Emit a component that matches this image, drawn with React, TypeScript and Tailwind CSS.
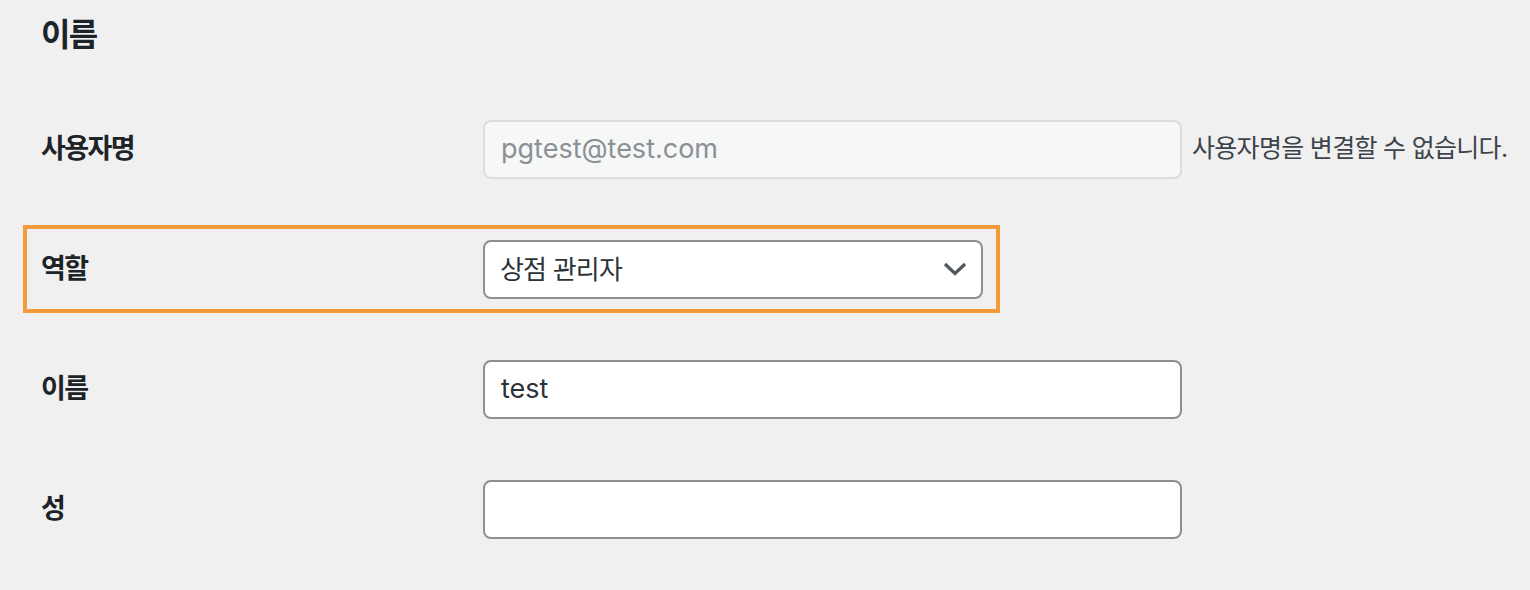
import React from "react";

const FONT = { fontFamily: '"Inter", "Noto Sans CJK KR", sans-serif' };

function Label({ children }: { children: React.ReactNode }) {
  return (
    <div className="w-[456px] shrink-0 pl-[14px] text-[27px] font-semibold tracking-[-1.6px] text-[#1d2327]">
      {children}
    </div>
  );
}

export default function App() {
  return (
    <div className="min-h-screen bg-[#f0f0f0]" style={FONT}>
      <div className="pl-[41px] pt-[15px]">
        <h2 className="text-[32px] leading-[40px] font-semibold tracking-[-1.6px] text-[#1d2327]">이름</h2>
      </div>
      <div className="mt-[50px] pl-[23px] flex flex-col gap-[32px]">
        <div className="h-[88px] border-4 border-transparent flex items-center">
          <Label>사용자명</Label>
          <div className="w-[699px] h-[59px] shrink-0 rounded-[8px] border-2 border-[#dcdcde] bg-[#f6f7f7] flex items-center pl-[16px] text-[27px] text-[#8c8f94]">
            pgtest@test.com
          </div>
          <div className="ml-[10px] text-[25px] tracking-[-0.7px] text-[#3c434a] whitespace-nowrap">
            사용자명을 변결할 수 없습니다.
          </div>
        </div>
        <div className="w-[977px] h-[88px] border-4 border-[#f39a3b] flex items-center">
          <Label>역할</Label>
          <div className="w-[500px] h-[59px] shrink-0 rounded-[8px] border-2 border-[#8c8f94] bg-white flex items-center justify-between pl-[15px] pr-[14px]">
            <span className="text-[26px] tracking-[-0.8px] text-[#2c3338]">상점 관리자</span>
            <svg width="24" height="14" viewBox="0 0 24 14" fill="none">
              <path d="M2 2 L12 11.5 L22 2" stroke="#50575e" strokeWidth="3.2" />
            </svg>
          </div>
        </div>
        <div className="h-[88px] border-4 border-transparent flex items-center">
          <Label>이름</Label>
          <div className="w-[699px] h-[59px] shrink-0 rounded-[8px] border-2 border-[#8c8f94] bg-white flex items-center pl-[16px] text-[27px] text-[#2c3338]">
            test
          </div>
        </div>
        <div className="h-[88px] border-4 border-transparent flex items-center">
          <Label>성</Label>
          <div className="w-[699px] h-[59px] shrink-0 rounded-[8px] border-2 border-[#8c8f94] bg-white" />
        </div>
      </div>
    </div>
  );
}
